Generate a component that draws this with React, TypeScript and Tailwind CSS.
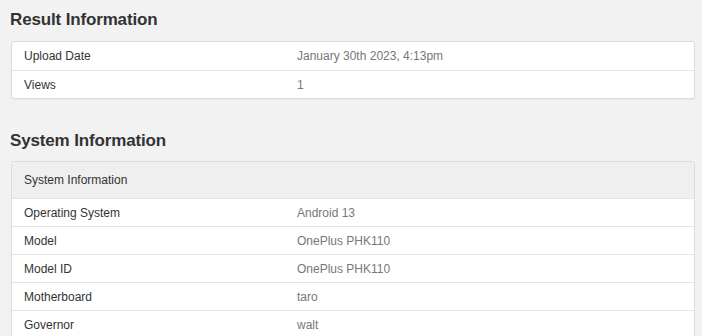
import React from "react";

const font = { fontFamily: '"Liberation Sans", Arial, Helvetica, sans-serif' };

function Row({ label, value }: { label: string; value: string }) {
  return (
    <div className="flex h-[28px] items-center border-t border-[#e3e3e3] px-[12px] text-[12px] first:border-t-0">
      <div className="w-[273px] text-[#333333]">{label}</div>
      <div className="text-[#777777]">{value}</div>
    </div>
  );
}

export default function App() {
  return (
    <div className="min-h-[336px] w-[702px] bg-[#f2f2f2] pl-[10px] pr-[7px]" style={font}>
      <div className="pt-[10px] text-[17px] font-bold leading-[20px] tracking-[-0.15px] text-[#333333]">Result Information</div>
      <div className="ml-[1px] mt-[11px] overflow-hidden rounded-[3px] border border-[#dcdcdc] bg-white shadow-[0_1px_1px_rgba(0,0,0,0.05)]">
        <Row label="Upload Date" value="January 30th 2023, 4:13pm" />
        <Row label="Views" value="1" />
      </div>
      <div className="mt-[32px] text-[17px] font-bold leading-[20px] tracking-[-0.15px] text-[#333333]">System Information</div>
      <div className="ml-[1px] mt-[10px] overflow-hidden rounded-t-[3px] border border-[#dcdcdc] bg-white">
        <div className="flex h-[36px] items-center bg-[#efefef] px-[12px] text-[12px] text-[#333333]">System Information</div>
        <Row label="Operating System" value="Android 13" />
        <Row label="Model" value="OnePlus PHK110" />
        <Row label="Model ID" value="OnePlus PHK110" />
        <Row label="Motherboard" value="taro" />
        <Row label="Governor" value="walt" />
      </div>
    </div>
  );
}
